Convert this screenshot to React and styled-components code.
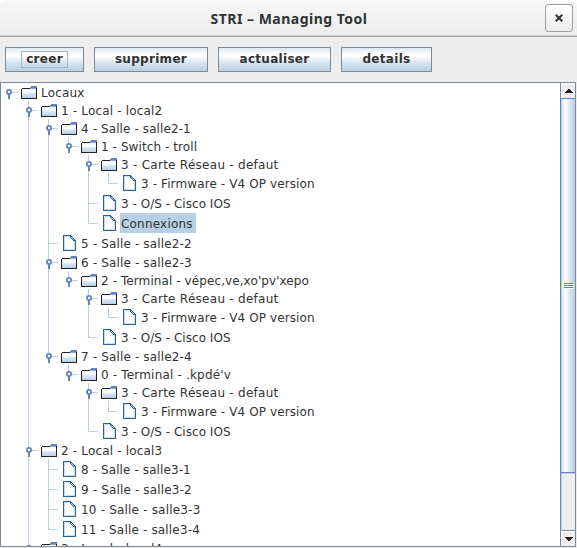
import React from "react";
import styled, { createGlobalStyle } from "styled-components";

const GlobalStyle = createGlobalStyle`
  * { box-sizing: border-box; }
  html, body { margin: 0; padding: 0; overflow: hidden; background: #ededed; }
`;

const Window = styled.div`
  width: 577px;
  height: 548px;
  display: flex;
  flex-direction: column;
  background: #eeeeee;
  color: #333333;
  font-family: "DejaVu Sans", sans-serif;
  font-size: 12px;
  overflow: hidden;
`;

const TitleCorners = styled.div`
  height: 37px;
  flex: none;
  background: #ffffff;
`;

const TitleBar = styled.header`
  height: 37px;
  display: grid;
  grid-template-columns: 38px 1fr 38px;
  align-items: center;
  border-bottom: 1px solid #a1a1a1;
  border-radius: 7px 7px 0 0;
  background: linear-gradient(#f7f7f7, #ececec);
  box-shadow: inset 0 -1px #d5d5d5, inset 0 1px #fbfbfb;
`;

const Title = styled.h1`
  grid-column: 2;
  margin: 0;
  padding: 2px 0 0 1px;
  text-align: center;
  font: bold 14px/18px "Noto Sans", sans-serif;
  letter-spacing: 0.48px;
  color: #2e3436;
  white-space: nowrap;
`;

const CloseButton = styled.button`
  width: 28px;
  height: 28px;
  margin-left: 6px;
  padding: 0;
  display: grid;
  place-items: center;
  border: 1px solid #a1a1a1;
  border-radius: 3px;
  background: linear-gradient(#ffffff, #ededed);
`;

const Toolbar = styled.nav`
  height: 45px;
  flex: none;
  display: flex;
  gap: 10px;
  padding: 10px 5px 0;
`;

const ToolButton = styled.button`
  width: ${(p) => p.$width}px;
  height: 25px;
  padding: 0;
  display: grid;
  place-items: center;
  border: 1px solid #7a8a99;
  background: linear-gradient(#dde8f3 0%, #ffffff 30%, #ffffff 34%, #dbe6f1 62%, #b8cfe5 100%);
  font: bold 12px/15px "DejaVu Sans", sans-serif;
  letter-spacing: 0.3px;
  color: #333333;
`;

const ToolLabel = styled.span`
  height: 17px;
  padding: 0 4px;
  border: 1px solid ${(p) => (p.$focused ? "#a3b8cc" : "transparent")};
`;

const ScrollPane = styled.main`
  width: 576px;
  height: 465px;
  display: flex;
  border: 1px solid #7a8a99;
  background: #ffffff;
`;

const TreeView = styled.div`
  flex: 1;
  min-width: 0;
  height: 463px;
  padding-left: 7px;
  overflow: hidden;
`;

const Row = styled.div`
  display: flex;
  height: ${(p) => (p.$leaf ? 20 : 18)}px;
`;

const Guide = styled.svg`
  display: block;
  flex: none;
  overflow: visible;
`;

const IconSlot = styled.span`
  width: 19px;
  height: 100%;
  flex: none;
  margin-left: -7px;
  padding: ${(p) => (p.$leaf ? "2px 0 0 2px" : "3px 0 0")};
  svg { display: block; }
`;

const Label = styled.span`
  height: 100%;
  padding: 0 3px 0 1px;
  line-height: ${(p) => (p.$leaf ? 22 : 20)}px;
  letter-spacing: ${(p) => p.$tracking}px;
  white-space: nowrap;
  background: ${(p) => (p.$selected ? "#b8cfe5" : "transparent")};
`;

const ScrollBar = styled.div`
  width: 15px;
  flex: none;
  display: flex;
  flex-direction: column;
  border-left: 1px solid #7a8a99;
  background: #eeeeee;
`;

const ArrowButton = styled.button`
  height: 15px;
  flex: none;
  padding: 0;
  display: grid;
  place-items: center;
  border: solid #ffffff;
  border-width: 1px 0 0 1px;
  background: #eeeeee;
`;

const Thumb = styled.div`
  height: 375px;
  flex: none;
  margin-left: -1px;
  display: flex;
  flex-direction: column;
  align-items: flex-end;
  justify-content: center;
  border: solid #6382bf;
  border-width: 1px 0 1px 1px;
  background: linear-gradient(90deg, #b8cfe5 0 1px, #dde8f3 1px, #ffffff 32%, #dbe6f1 62%, #b8cfe5 100%);
`;

const Track = styled.div`
  flex: 1;
  border-left: 1px solid #b8cfe5;
  border-top: 1px solid #b8cfe5;
  border-bottom: 1px solid #7a8a99;
`;

const LINE = "#b8cfe5";

function FolderIcon() {
  return (
    <svg width="16" height="13" shapeRendering="crispEdges">
      <defs>
        <linearGradient id="folder" x1="0" y1="0" x2="0" y2="1">
          <stop offset="0" stopColor="#eef4fa" />
          <stop offset="0.35" stopColor="#ffffff" />
          <stop offset="0.5" stopColor="#dde8f3" />
          <stop offset="1" stopColor="#b8cfe5" />
        </linearGradient>
      </defs>
      <path d="M1 3h14v9H1z" fill="url(#folder)" />
      <path d="M0 3h1v10H0zM1 2h8v1H1zM1 12h15v1H1zM15 3h1v9h-1z" fill="#222222" />
      <path d="M10 0h6v2H9V1h1z" fill="#6382bf" />
      <path d="M9 2h6v1H9z" fill="#8fa8d2" />
      <path d="M15 2h1v1h-1z" fill="#222222" />
    </svg>
  );
}

function LeafIcon() {
  return (
    <svg width="13" height="16" shapeRendering="crispEdges">
      <path d="M1 1h7l4 4v10H1z" fill="#ffffff" />
      <path d="M1 1h1v14H1zM1 14h11v1H1zM11 6h1v9h-1zM1 1h6v1H1z" fill="#c8dcee" />
      <path d="M0 0h8v1H0zM0 0h1v16H0zM0 15h13v1H0zM12 5h1v11h-1zM8 1h1v1H8zM9 2h1v1H9zM10 3h1v1h-1zM11 4h1v1h-1zM7 1h1v2H7zM8 3h1v1H8zM9 4h1v1H9zM10 5h2v1h-2z" fill="#2c6194" />
      <path d="M8 2h1v1H8zM9 3h1v1H9zM10 4h1v1h-1z" fill="#b8cfe5" />
    </svg>
  );
}

function Handle() {
  return (
    <g>
      <rect y="11" width="2" height="5" fill="#6382bf" />
      <circle cx="1" cy="9" r="2.1" fill="#ffffff" stroke="#6382bf" strokeWidth="1.8" />
    </g>
  );
}

function TreeNode({ node, ancestors = [], last = true, root = false }) {
  const leaf = !node.children;
  const height = leaf ? 20 : 18;
  const middle = leaf ? 10 : 9;
  return (
    <>
      <Row $leaf={leaf}>
        {ancestors.map((continues, i) => (
          <Guide key={i} width="20" height={height}>
            {continues && <rect width="1" height={height} fill={LINE} />}
          </Guide>
        ))}
        <Guide width="20" height={height}>
          {!root && <rect width="1" height={last ? middle : height} fill={LINE} />}
          <rect y={middle} width="10" height="1" fill={LINE} />
          {!leaf && <Handle />}
        </Guide>
        <IconSlot $leaf={leaf}>{leaf ? <LeafIcon /> : <FolderIcon />}</IconSlot>
        <Label $leaf={leaf} $selected={node.selected} $tracking={node.tracking ?? 0.15}>
          {node.label}
        </Label>
      </Row>
      {node.children?.map((child, i) => (
        <TreeNode
          key={i}
          node={child}
          ancestors={root ? [false] : [...ancestors, !last]}
          last={i === node.children.length - 1}
        />
      ))}
    </>
  );
}

const networkCard = () => ({
  label: "3 - Carte Réseau - defaut",
  tracking: 0.27,
  children: [{ label: "3 - Firmware - V4 OP version", tracking: 0.11 }],
});
const system = () => ({ label: "3 - O/S - Cisco IOS", tracking: 0.03 });

const tree = {
  label: "Locaux",
  tracking: 0.2,
  children: [
    {
      label: "1 - Local - local2",
      tracking: 0.17,
      children: [
        {
          label: "4 - Salle - salle2-1",
          tracking: 0.1,
          children: [
            {
              label: "1 - Switch - troll",
              tracking: 0.08,
              children: [
                networkCard(),
                system(),
                { label: "Connexions", selected: true, tracking: 0.2 },
              ],
            },
          ],
        },
        { label: "5 - Salle - salle2-2" },
        {
          label: "6 - Salle - salle2-3",
          children: [
            {
              label: "2 - Terminal - vépec,ve,xo'pv'xepo",
              tracking: 0.09,
              children: [networkCard(), system()],
            },
          ],
        },
        {
          label: "7 - Salle - salle2-4",
          children: [
            { label: "0 - Terminal - .kpdé'v", tracking: 0.18, children: [networkCard(), system()] },
          ],
        },
      ],
    },
    {
      label: "2 - Local - local3",
      tracking: 0.17,
      children: [
        { label: "8 - Salle - salle3-1", tracking: 0.1 },
        { label: "9 - Salle - salle3-2" },
        { label: "10 - Salle - salle3-3", tracking: 0.19 },
        { label: "11 - Salle - salle3-4", tracking: 0.17 },
      ],
    },
    { label: "3 - Local - local4", tracking: 0.17, children: [] },
  ],
};

const actions = [
  { label: "creer", width: 79, focused: true },
  { label: "supprimer", width: 114 },
  { label: "actualiser", width: 113 },
  { label: "details", width: 91 },
];

export default function App() {
  return (
    <Window>
      <GlobalStyle />
      <TitleCorners>
        <TitleBar>
          <Title>STRI – Managing Tool</Title>
          <CloseButton aria-label="Close">
            <svg width="8" height="8">
              <path d="M.7.7l6.6 6.6M7.3.7L.7 7.3" stroke="#2e3436" strokeWidth="2" />
            </svg>
          </CloseButton>
        </TitleBar>
      </TitleCorners>
      <Toolbar>
        {actions.map((a) => (
          <ToolButton key={a.label} $width={a.width}>
            <ToolLabel $focused={a.focused}>{a.label}</ToolLabel>
          </ToolButton>
        ))}
      </Toolbar>
      <ScrollPane>
        <TreeView>
          <TreeNode node={tree} root />
        </TreeView>
        <ScrollBar>
          <ArrowButton aria-label="Scroll up">
            <svg width="8" height="4" shapeRendering="crispEdges">
              <path d="M3 0h2v1h1v1h1v1h1v1H0V3h1V2h1V1h1z" fill="#222" />
            </svg>
          </ArrowButton>
          <Thumb>
            <svg width="11" height="6" shapeRendering="crispEdges">
              <path d="M1 1h9v1H1zM1 3h9v1H1zM1 5h9v1H1z" fill="#ffffff" />
              <path d="M0 0h9v1H0zM0 2h9v1H0zM0 4h9v1H0z" fill="#6382bf" />
            </svg>
          </Thumb>
          <Track />
          <ArrowButton aria-label="Scroll down">
            <svg width="8" height="4" shapeRendering="crispEdges">
              <path d="M0 0h8v1H7v1H6v1H5v1H3V3H2V2H1V1H0z" fill="#222" />
            </svg>
          </ArrowButton>
        </ScrollBar>
      </ScrollPane>
    </Window>
  );
}
